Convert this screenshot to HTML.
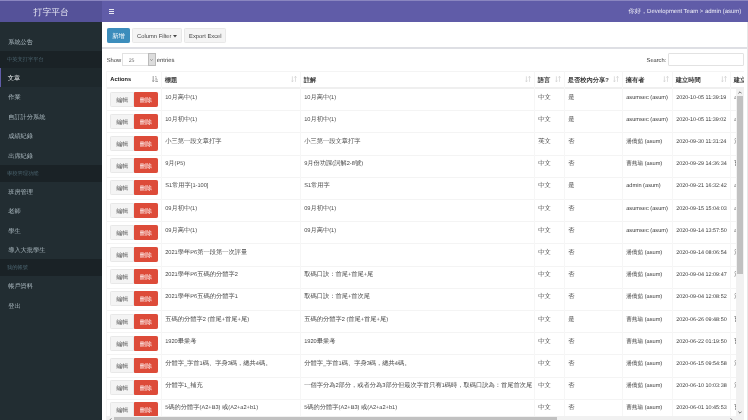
<!DOCTYPE html>
<html><head><meta charset="utf-8"><style>
*{box-sizing:border-box;margin:0;padding:0}
html,body{width:748px;height:420px;overflow:hidden;background:#fff}
body{filter:blur(0.3px)}
body{position:relative;font-family:"Liberation Sans",sans-serif;color:#333;text-rendering:geometricPrecision}
.a{position:absolute;white-space:nowrap}
.logo{left:0;top:0;width:102.35px;height:22.25px;background:#555299;color:#e8e8f4;font-size:8.8px;line-height:24.4px;text-align:center}
.nav{left:102.35px;top:0;right:0;height:22.25px;background:#605ca8}
.topline{left:0;top:0;width:748px;height:1px;background:#8a86c0}
.side{left:0;top:22.25px;width:102.35px;height:398px;background:#222d32}
.si{left:0;width:102.35px;height:19.6px;color:#aebcc3;font-size:6.2px;line-height:19.6px;padding-left:8.2px}
.sh{left:0;width:102.35px;height:16.6px;background:#1a2226;color:#4b646f;font-size:5.25px;line-height:16.6px;padding-left:6.9px}
.sa{background:#1e282c;color:#eef0f2;border-left:1.35px solid #605ca8;padding-left:6.85px}
.btn{height:14.8px;border-radius:1.3px;font-size:5.8px;line-height:13.8px;text-align:center;border:0.5px solid #e8e8e8;background:#f4f4f4;color:#444}
.bp{background:#3c8dbc;border-color:#3c8dbc;color:#fff}
.bd{background:#dd4b39;border-color:#dd4b39;color:#fff}
.vl{width:1px;background:#f6f6f6}
.hl{height:1px;background:#f4f4f4}
.th{font-size:6.25px;font-weight:bold;color:#333;line-height:8.9px}
.td{font-size:6.25px;color:#484848;line-height:8.9px}
.lt{font-size:5.65px;color:#383838;line-height:8.9px}
.si,.sh,.btn,.td,.lt,.th,.nt{padding-top:1px}
</style></head><body>

<div class="a logo">打字平台</div>
<div class="a nav"></div>
<div class="a topline"></div>
<div class="a" style="left:108.9px;top:8.90px;width:5.2px;height:1.10px;background:#fff;opacity:.85"></div>
<div class="a" style="left:108.9px;top:10.90px;width:5.2px;height:1.30px;background:#fff;opacity:.85"></div>
<div class="a" style="left:108.9px;top:12.70px;width:5.2px;height:1.30px;background:#fff;opacity:.85"></div>
<div class="a nt" style="right:6.8px;top:7.3px;color:#f0f0f8;font-size:6.2px;line-height:8.9px">你好，<span style="font-size:5.95px">Development Team &gt; admin (asum)</span></div>
<div class="a side"></div>
<div class="a si" style="top:31.70px">系統公告</div>
<div class="a sh" style="top:51.20px">中英文打字平台</div>
<div class="a si sa" style="top:67.60px">文章</div>
<div class="a si" style="top:87.20px">作業</div>
<div class="a si" style="top:106.80px">自訂計分系統</div>
<div class="a si" style="top:126.40px">成績紀錄</div>
<div class="a si" style="top:146.00px">出席紀錄</div>
<div class="a sh" style="top:165.00px">學校管理功能</div>
<div class="a si" style="top:181.60px">班房管理</div>
<div class="a si" style="top:201.10px">老師</div>
<div class="a si" style="top:220.70px">學生</div>
<div class="a si" style="top:240.20px">導入大批學生</div>
<div class="a sh" style="top:259.40px">我的帳號</div>
<div class="a si" style="top:275.90px">帳戶資料</div>
<div class="a si" style="top:295.70px">登出</div>
<div class="a btn bp" style="left:106.7px;top:28.1px;width:23.4px;font-size:6.2px">新增</div>
<div class="a btn" style="left:131.8px;top:28.1px;width:50.6px;line-height:15.6px">Column Filter <svg width="4" height="3" viewBox="0 0 4 3" style="vertical-align:0.6px"><path d="M0 0H4L2 2.4Z" fill="#444"/></svg></div>
<div class="a btn" style="left:184.1px;top:28.1px;width:42.4px;line-height:15.6px">Export Excel</div>
<div class="a" style="left:102.35px;top:47px;width:646px;height:2px;background:#dedfe4"></div>
<div class="a" style="left:747px;top:22.25px;width:1px;height:400px;background:#e6e6e6"></div>
<div class="a lt" style="left:106.7px;top:55.8px;font-size:5.8px">Show</div>
<div class="a" style="left:122.3px;top:53px;width:33.6px;height:13.3px;border:0.6px solid #e2e2e2;background:#fff"></div>
<div class="a" style="left:147.9px;top:53px;width:8px;height:13.3px;background:#ddd;border:0.5px solid #bbb"></div>
<div class="a lt" style="left:128.7px;top:56.2px;font-size:5.2px;color:#666">25</div>
<svg class="a" style="left:150.4px;top:58.6px" width="3" height="2" viewBox="0 0 3 2"><path d="M0.2 0.3L1.5 1.6L2.8 0.3" stroke="#555" stroke-width="0.5" fill="none"/></svg>
<div class="a lt" style="left:156.8px;top:55.8px;font-size:5.9px">entries</div>
<div class="a lt" style="left:646.6px;top:56px;font-size:5.7px">Search:</div>
<div class="a" style="left:668.3px;top:53.4px;width:75.3px;height:12.9px;border:0.6px solid #e2e2e2;border-radius:1px;background:#fff"></div>
<div class="a hl" style="left:106.00px;top:71.00px;width:637.60px"></div>
<div class="a" style="left:106.00px;top:87px;width:637.60px;height:2px;background:#efefef"></div>
<div class="a hl" style="left:106.00px;top:110.20px;width:630.00px"></div>
<div class="a hl" style="left:106.00px;top:132.40px;width:630.00px"></div>
<div class="a hl" style="left:106.00px;top:154.60px;width:630.00px"></div>
<div class="a hl" style="left:106.00px;top:176.80px;width:630.00px"></div>
<div class="a hl" style="left:106.00px;top:199.00px;width:630.00px"></div>
<div class="a hl" style="left:106.00px;top:221.20px;width:630.00px"></div>
<div class="a hl" style="left:106.00px;top:243.40px;width:630.00px"></div>
<div class="a hl" style="left:106.00px;top:265.60px;width:630.00px"></div>
<div class="a hl" style="left:106.00px;top:287.80px;width:630.00px"></div>
<div class="a hl" style="left:106.00px;top:310.00px;width:630.00px"></div>
<div class="a hl" style="left:106.00px;top:332.20px;width:630.00px"></div>
<div class="a hl" style="left:106.00px;top:354.40px;width:630.00px"></div>
<div class="a hl" style="left:106.00px;top:376.60px;width:630.00px"></div>
<div class="a hl" style="left:106.00px;top:398.80px;width:630.00px"></div>
<div class="a hl" style="left:106.00px;top:421.00px;width:630.00px"></div>
<div class="a vl" style="left:106.00px;top:71.00px;height:349.00px"></div>
<div class="a vl" style="left:161.00px;top:71.00px;height:349.00px"></div>
<div class="a vl" style="left:300.00px;top:71.00px;height:349.00px"></div>
<div class="a vl" style="left:534.00px;top:71.00px;height:349.00px"></div>
<div class="a vl" style="left:564.00px;top:71.00px;height:349.00px"></div>
<div class="a vl" style="left:622.00px;top:71.00px;height:349.00px"></div>
<div class="a vl" style="left:672.00px;top:71.00px;height:349.00px"></div>
<div class="a vl" style="left:730.00px;top:71.00px;height:349.00px"></div>
<div class="a" style="left:106px;top:71px;width:637.60px;height:18px;overflow:hidden">
<div class="a th" style="left:4.30px;top:4.3px;font-size:5.7px;letter-spacing:0;color:#222">Actions</div>
<div class="a th" style="left:58.80px;top:5.3px;font-weight:bold;color:#3a3a3a">標題</div>
<div class="a th" style="left:197.80px;top:5.3px;font-weight:bold;color:#3a3a3a">註解</div>
<div class="a th" style="left:431.80px;top:5.3px;font-weight:bold;color:#3a3a3a">語言</div>
<div class="a th" style="left:461.80px;top:5.3px;font-weight:bold;color:#3a3a3a">是否校內分享<span style="font-size:5.9px">?</span></div>
<div class="a th" style="left:519.80px;top:5.3px;font-weight:bold;color:#3a3a3a">擁有者</div>
<div class="a th" style="left:569.80px;top:5.3px;font-weight:bold;color:#3a3a3a">建立時間</div>
<div class="a th" style="left:627.80px;top:5.3px;font-weight:bold;color:#3a3a3a">建立</div>
</div>
<svg class="a" style="left:290.60px;top:75.90px" width="6" height="6.2" viewBox="0 0 6 6.2"><path d="M1.4 0.3V5.9M0.3 4.6L1.4 5.9L2.5 4.6M4.5 5.9V0.3M3.4 1.6L4.5 0.3L5.6 1.6" stroke="#d0d0d0" stroke-width="0.7" fill="none"/></svg>
<svg class="a" style="left:524.60px;top:75.90px" width="6" height="6.2" viewBox="0 0 6 6.2"><path d="M1.4 0.3V5.9M0.3 4.6L1.4 5.9L2.5 4.6M4.5 5.9V0.3M3.4 1.6L4.5 0.3L5.6 1.6" stroke="#d0d0d0" stroke-width="0.7" fill="none"/></svg>
<svg class="a" style="left:554.60px;top:75.90px" width="6" height="6.2" viewBox="0 0 6 6.2"><path d="M1.4 0.3V5.9M0.3 4.6L1.4 5.9L2.5 4.6M4.5 5.9V0.3M3.4 1.6L4.5 0.3L5.6 1.6" stroke="#d0d0d0" stroke-width="0.7" fill="none"/></svg>
<svg class="a" style="left:612.60px;top:75.90px" width="6" height="6.2" viewBox="0 0 6 6.2"><path d="M1.4 0.3V5.9M0.3 4.6L1.4 5.9L2.5 4.6M4.5 5.9V0.3M3.4 1.6L4.5 0.3L5.6 1.6" stroke="#d0d0d0" stroke-width="0.7" fill="none"/></svg>
<svg class="a" style="left:662.60px;top:75.90px" width="6" height="6.2" viewBox="0 0 6 6.2"><path d="M1.4 0.3V5.9M0.3 4.6L1.4 5.9L2.5 4.6M4.5 5.9V0.3M3.4 1.6L4.5 0.3L5.6 1.6" stroke="#d0d0d0" stroke-width="0.7" fill="none"/></svg>
<svg class="a" style="left:720.60px;top:75.90px" width="6" height="6.2" viewBox="0 0 6 6.2"><path d="M1.4 0.3V5.9M0.3 4.6L1.4 5.9L2.5 4.6M4.5 5.9V0.3M3.4 1.6L4.5 0.3L5.6 1.6" stroke="#d0d0d0" stroke-width="0.7" fill="none"/></svg>
<svg class="a" style="left:151.9px;top:76px" width="6.4" height="6" viewBox="0 0 6.4 6"><path d="M1.2 0V5.6M0.2 4.4L1.2 5.7L2.2 4.4" stroke="#888" stroke-width="0.8" fill="none"/><path d="M3.3 0.5H4.3M3.3 2.2H5M3.3 3.9H5.7M3.3 5.5H6.4" stroke="#999" stroke-width="0.9"/></svg>
<div class="a btn" style="left:110.2px;top:91.60px;width:24px;height:15px;line-height:14.4px;border-radius:1.3px 0 0 1.3px;font-size:6px;color:#555">編輯</div>
<div class="a btn bd" style="left:134px;top:91.60px;width:24px;height:15px;line-height:14.4px;border-radius:0 1.3px 1.3px 0;font-size:6px">刪除</div>
<div class="a td" style="left:165.20px;top:92.60px;width:134.80px;overflow:hidden"><span style="font-size:5.65px">10</span>月高中<span style="font-size:5.65px">(1)</span></div>
<div class="a td" style="left:304.20px;top:92.60px;width:229.80px;overflow:hidden"><span style="font-size:5.65px">10</span>月高中<span style="font-size:5.65px">(1)</span></div>
<div class="a td" style="left:538.20px;top:92.60px;width:25.80px;overflow:hidden">中文</div>
<div class="a td" style="left:568.20px;top:92.60px;width:53.80px;overflow:hidden">是</div>
<div class="a lt" style="left:626.20px;top:92.60px;width:45.80px;overflow:hidden"><span style="font-size:5.65px">asumsec (asum)</span></div>
<div class="a lt" style="left:676.20px;top:92.60px;width:53.80px;overflow:hidden;font-size:5.45px">2020-10-05 11:39:19</div>
<div class="a td" style="left:734.20px;top:92.60px;width:1.80px;overflow:hidden"><span style="font-size:5.65px">a</span></div>
<div class="a btn" style="left:110.2px;top:113.80px;width:24px;height:15px;line-height:14.4px;border-radius:1.3px 0 0 1.3px;font-size:6px;color:#555">編輯</div>
<div class="a btn bd" style="left:134px;top:113.80px;width:24px;height:15px;line-height:14.4px;border-radius:0 1.3px 1.3px 0;font-size:6px">刪除</div>
<div class="a td" style="left:165.20px;top:114.80px;width:134.80px;overflow:hidden"><span style="font-size:5.65px">10</span>月初中<span style="font-size:5.65px">(1)</span></div>
<div class="a td" style="left:304.20px;top:114.80px;width:229.80px;overflow:hidden"><span style="font-size:5.65px">10</span>月初中<span style="font-size:5.65px">(1)</span></div>
<div class="a td" style="left:538.20px;top:114.80px;width:25.80px;overflow:hidden">中文</div>
<div class="a td" style="left:568.20px;top:114.80px;width:53.80px;overflow:hidden">是</div>
<div class="a lt" style="left:626.20px;top:114.80px;width:45.80px;overflow:hidden"><span style="font-size:5.65px">asumsec (asum)</span></div>
<div class="a lt" style="left:676.20px;top:114.80px;width:53.80px;overflow:hidden;font-size:5.45px">2020-10-05 11:39:02</div>
<div class="a td" style="left:734.20px;top:114.80px;width:1.80px;overflow:hidden"><span style="font-size:5.65px">a</span></div>
<div class="a btn" style="left:110.2px;top:136.00px;width:24px;height:15px;line-height:14.4px;border-radius:1.3px 0 0 1.3px;font-size:6px;color:#555">編輯</div>
<div class="a btn bd" style="left:134px;top:136.00px;width:24px;height:15px;line-height:14.4px;border-radius:0 1.3px 1.3px 0;font-size:6px">刪除</div>
<div class="a td" style="left:165.20px;top:137.00px;width:134.80px;overflow:hidden">小三第一段文章打字</div>
<div class="a td" style="left:304.20px;top:137.00px;width:229.80px;overflow:hidden">小三第一段文章打字</div>
<div class="a td" style="left:538.20px;top:137.00px;width:25.80px;overflow:hidden">英文</div>
<div class="a td" style="left:568.20px;top:137.00px;width:53.80px;overflow:hidden">否</div>
<div class="a lt" style="left:626.20px;top:137.00px;width:45.80px;overflow:hidden">潘僑茹<span style="font-size:5.65px"> (asum)</span></div>
<div class="a lt" style="left:676.20px;top:137.00px;width:53.80px;overflow:hidden;font-size:5.45px">2020-09-30 11:31:24</div>
<div class="a td" style="left:734.20px;top:137.00px;width:1.80px;overflow:hidden">潘</div>
<div class="a btn" style="left:110.2px;top:158.20px;width:24px;height:15px;line-height:14.4px;border-radius:1.3px 0 0 1.3px;font-size:6px;color:#555">編輯</div>
<div class="a btn bd" style="left:134px;top:158.20px;width:24px;height:15px;line-height:14.4px;border-radius:0 1.3px 1.3px 0;font-size:6px">刪除</div>
<div class="a td" style="left:165.20px;top:159.20px;width:134.80px;overflow:hidden"><span style="font-size:5.65px">9</span>月<span style="font-size:5.65px">(P5)</span></div>
<div class="a td" style="left:304.20px;top:159.20px;width:229.80px;overflow:hidden"><span style="font-size:5.65px">9</span>月份功課<span style="font-size:5.65px">(</span>詞解<span style="font-size:5.65px">2-8</span>號<span style="font-size:5.65px">)</span></div>
<div class="a td" style="left:538.20px;top:159.20px;width:25.80px;overflow:hidden">中文</div>
<div class="a td" style="left:568.20px;top:159.20px;width:53.80px;overflow:hidden">否</div>
<div class="a lt" style="left:626.20px;top:159.20px;width:45.80px;overflow:hidden">曹燕瑜<span style="font-size:5.65px"> (asum)</span></div>
<div class="a lt" style="left:676.20px;top:159.20px;width:53.80px;overflow:hidden;font-size:5.45px">2020-09-29 14:36:34</div>
<div class="a td" style="left:734.20px;top:159.20px;width:1.80px;overflow:hidden">曹</div>
<div class="a btn" style="left:110.2px;top:180.40px;width:24px;height:15px;line-height:14.4px;border-radius:1.3px 0 0 1.3px;font-size:6px;color:#555">編輯</div>
<div class="a btn bd" style="left:134px;top:180.40px;width:24px;height:15px;line-height:14.4px;border-radius:0 1.3px 1.3px 0;font-size:6px">刪除</div>
<div class="a td" style="left:165.20px;top:181.40px;width:134.80px;overflow:hidden"><span style="font-size:5.65px">S1</span>常用字<span style="font-size:5.65px">[1-100]</span></div>
<div class="a td" style="left:304.20px;top:181.40px;width:229.80px;overflow:hidden"><span style="font-size:5.65px">S1</span>常用字</div>
<div class="a td" style="left:538.20px;top:181.40px;width:25.80px;overflow:hidden">中文</div>
<div class="a td" style="left:568.20px;top:181.40px;width:53.80px;overflow:hidden">是</div>
<div class="a lt" style="left:626.20px;top:181.40px;width:45.80px;overflow:hidden"><span style="font-size:5.65px">admin (asum)</span></div>
<div class="a lt" style="left:676.20px;top:181.40px;width:53.80px;overflow:hidden;font-size:5.45px">2020-09-21 16:32:42</div>
<div class="a td" style="left:734.20px;top:181.40px;width:1.80px;overflow:hidden"><span style="font-size:5.65px">a</span></div>
<div class="a btn" style="left:110.2px;top:202.60px;width:24px;height:15px;line-height:14.4px;border-radius:1.3px 0 0 1.3px;font-size:6px;color:#555">編輯</div>
<div class="a btn bd" style="left:134px;top:202.60px;width:24px;height:15px;line-height:14.4px;border-radius:0 1.3px 1.3px 0;font-size:6px">刪除</div>
<div class="a td" style="left:165.20px;top:203.60px;width:134.80px;overflow:hidden"><span style="font-size:5.65px">09</span>月初中<span style="font-size:5.65px">(1)</span></div>
<div class="a td" style="left:304.20px;top:203.60px;width:229.80px;overflow:hidden"><span style="font-size:5.65px">09</span>月初中<span style="font-size:5.65px">(1)</span></div>
<div class="a td" style="left:538.20px;top:203.60px;width:25.80px;overflow:hidden">中文</div>
<div class="a td" style="left:568.20px;top:203.60px;width:53.80px;overflow:hidden">否</div>
<div class="a lt" style="left:626.20px;top:203.60px;width:45.80px;overflow:hidden"><span style="font-size:5.65px">asumsec (asum)</span></div>
<div class="a lt" style="left:676.20px;top:203.60px;width:53.80px;overflow:hidden;font-size:5.45px">2020-09-15 15:04:03</div>
<div class="a td" style="left:734.20px;top:203.60px;width:1.80px;overflow:hidden"><span style="font-size:5.65px">a</span></div>
<div class="a btn" style="left:110.2px;top:224.80px;width:24px;height:15px;line-height:14.4px;border-radius:1.3px 0 0 1.3px;font-size:6px;color:#555">編輯</div>
<div class="a btn bd" style="left:134px;top:224.80px;width:24px;height:15px;line-height:14.4px;border-radius:0 1.3px 1.3px 0;font-size:6px">刪除</div>
<div class="a td" style="left:165.20px;top:225.80px;width:134.80px;overflow:hidden"><span style="font-size:5.65px">09</span>月高中<span style="font-size:5.65px">(1)</span></div>
<div class="a td" style="left:304.20px;top:225.80px;width:229.80px;overflow:hidden"><span style="font-size:5.65px">09</span>月高中<span style="font-size:5.65px">(1)</span></div>
<div class="a td" style="left:538.20px;top:225.80px;width:25.80px;overflow:hidden">中文</div>
<div class="a td" style="left:568.20px;top:225.80px;width:53.80px;overflow:hidden">否</div>
<div class="a lt" style="left:626.20px;top:225.80px;width:45.80px;overflow:hidden"><span style="font-size:5.65px">asumsec (asum)</span></div>
<div class="a lt" style="left:676.20px;top:225.80px;width:53.80px;overflow:hidden;font-size:5.45px">2020-09-14 13:57:50</div>
<div class="a td" style="left:734.20px;top:225.80px;width:1.80px;overflow:hidden"><span style="font-size:5.65px">a</span></div>
<div class="a btn" style="left:110.2px;top:247.00px;width:24px;height:15px;line-height:14.4px;border-radius:1.3px 0 0 1.3px;font-size:6px;color:#555">編輯</div>
<div class="a btn bd" style="left:134px;top:247.00px;width:24px;height:15px;line-height:14.4px;border-radius:0 1.3px 1.3px 0;font-size:6px">刪除</div>
<div class="a td" style="left:165.20px;top:248.00px;width:134.80px;overflow:hidden"><span style="font-size:5.65px">2021</span>學年<span style="font-size:5.65px">P6</span>第一段第一次評量</div>
<div class="a td" style="left:304.20px;top:248.00px;width:229.80px;overflow:hidden"></div>
<div class="a td" style="left:538.20px;top:248.00px;width:25.80px;overflow:hidden">中文</div>
<div class="a td" style="left:568.20px;top:248.00px;width:53.80px;overflow:hidden">否</div>
<div class="a lt" style="left:626.20px;top:248.00px;width:45.80px;overflow:hidden">潘僑茹<span style="font-size:5.65px"> (asum)</span></div>
<div class="a lt" style="left:676.20px;top:248.00px;width:53.80px;overflow:hidden;font-size:5.45px">2020-09-14 08:06:54</div>
<div class="a td" style="left:734.20px;top:248.00px;width:1.80px;overflow:hidden">潘</div>
<div class="a btn" style="left:110.2px;top:269.20px;width:24px;height:15px;line-height:14.4px;border-radius:1.3px 0 0 1.3px;font-size:6px;color:#555">編輯</div>
<div class="a btn bd" style="left:134px;top:269.20px;width:24px;height:15px;line-height:14.4px;border-radius:0 1.3px 1.3px 0;font-size:6px">刪除</div>
<div class="a td" style="left:165.20px;top:270.20px;width:134.80px;overflow:hidden"><span style="font-size:5.65px">2021</span>學年<span style="font-size:5.65px">P6</span>五碼的分體字<span style="font-size:5.65px">2</span></div>
<div class="a td" style="left:304.20px;top:270.20px;width:229.80px;overflow:hidden">取碼口訣：首尾<span style="font-size:5.65px">+</span>首尾<span style="font-size:5.65px">+</span>尾</div>
<div class="a td" style="left:538.20px;top:270.20px;width:25.80px;overflow:hidden">中文</div>
<div class="a td" style="left:568.20px;top:270.20px;width:53.80px;overflow:hidden">否</div>
<div class="a lt" style="left:626.20px;top:270.20px;width:45.80px;overflow:hidden">潘僑茹<span style="font-size:5.65px"> (asum)</span></div>
<div class="a lt" style="left:676.20px;top:270.20px;width:53.80px;overflow:hidden;font-size:5.45px">2020-09-04 12:09:47</div>
<div class="a td" style="left:734.20px;top:270.20px;width:1.80px;overflow:hidden">潘</div>
<div class="a btn" style="left:110.2px;top:291.40px;width:24px;height:15px;line-height:14.4px;border-radius:1.3px 0 0 1.3px;font-size:6px;color:#555">編輯</div>
<div class="a btn bd" style="left:134px;top:291.40px;width:24px;height:15px;line-height:14.4px;border-radius:0 1.3px 1.3px 0;font-size:6px">刪除</div>
<div class="a td" style="left:165.20px;top:292.40px;width:134.80px;overflow:hidden"><span style="font-size:5.65px">2021</span>學年<span style="font-size:5.65px">P6</span>五碼的分體字<span style="font-size:5.65px">1</span></div>
<div class="a td" style="left:304.20px;top:292.40px;width:229.80px;overflow:hidden">取碼口訣：首尾<span style="font-size:5.65px">+</span>首次尾</div>
<div class="a td" style="left:538.20px;top:292.40px;width:25.80px;overflow:hidden">中文</div>
<div class="a td" style="left:568.20px;top:292.40px;width:53.80px;overflow:hidden">否</div>
<div class="a lt" style="left:626.20px;top:292.40px;width:45.80px;overflow:hidden">潘僑茹<span style="font-size:5.65px"> (asum)</span></div>
<div class="a lt" style="left:676.20px;top:292.40px;width:53.80px;overflow:hidden;font-size:5.45px">2020-09-04 12:08:52</div>
<div class="a td" style="left:734.20px;top:292.40px;width:1.80px;overflow:hidden">潘</div>
<div class="a btn" style="left:110.2px;top:313.60px;width:24px;height:15px;line-height:14.4px;border-radius:1.3px 0 0 1.3px;font-size:6px;color:#555">編輯</div>
<div class="a btn bd" style="left:134px;top:313.60px;width:24px;height:15px;line-height:14.4px;border-radius:0 1.3px 1.3px 0;font-size:6px">刪除</div>
<div class="a td" style="left:165.20px;top:314.60px;width:134.80px;overflow:hidden">五碼的分體字<span style="font-size:5.65px">2 (</span>首尾<span style="font-size:5.65px">+</span>首尾<span style="font-size:5.65px">+</span>尾<span style="font-size:5.65px">)</span></div>
<div class="a td" style="left:304.20px;top:314.60px;width:229.80px;overflow:hidden">五碼的分體字<span style="font-size:5.65px">2 (</span>首尾<span style="font-size:5.65px">+</span>首尾<span style="font-size:5.65px">+</span>尾<span style="font-size:5.65px">)</span></div>
<div class="a td" style="left:538.20px;top:314.60px;width:25.80px;overflow:hidden">中文</div>
<div class="a td" style="left:568.20px;top:314.60px;width:53.80px;overflow:hidden">是</div>
<div class="a lt" style="left:626.20px;top:314.60px;width:45.80px;overflow:hidden">曹燕瑜<span style="font-size:5.65px"> (asum)</span></div>
<div class="a lt" style="left:676.20px;top:314.60px;width:53.80px;overflow:hidden;font-size:5.45px">2020-06-26 09:48:50</div>
<div class="a td" style="left:734.20px;top:314.60px;width:1.80px;overflow:hidden">曹</div>
<div class="a btn" style="left:110.2px;top:335.80px;width:24px;height:15px;line-height:14.4px;border-radius:1.3px 0 0 1.3px;font-size:6px;color:#555">編輯</div>
<div class="a btn bd" style="left:134px;top:335.80px;width:24px;height:15px;line-height:14.4px;border-radius:0 1.3px 1.3px 0;font-size:6px">刪除</div>
<div class="a td" style="left:165.20px;top:336.80px;width:134.80px;overflow:hidden"><span style="font-size:5.65px">1920</span>畢業考</div>
<div class="a td" style="left:304.20px;top:336.80px;width:229.80px;overflow:hidden"><span style="font-size:5.65px">1920</span>畢業考</div>
<div class="a td" style="left:538.20px;top:336.80px;width:25.80px;overflow:hidden">中文</div>
<div class="a td" style="left:568.20px;top:336.80px;width:53.80px;overflow:hidden">否</div>
<div class="a lt" style="left:626.20px;top:336.80px;width:45.80px;overflow:hidden">曹燕瑜<span style="font-size:5.65px"> (asum)</span></div>
<div class="a lt" style="left:676.20px;top:336.80px;width:53.80px;overflow:hidden;font-size:5.45px">2020-06-22 01:19:50</div>
<div class="a td" style="left:734.20px;top:336.80px;width:1.80px;overflow:hidden">曹</div>
<div class="a btn" style="left:110.2px;top:358.00px;width:24px;height:15px;line-height:14.4px;border-radius:1.3px 0 0 1.3px;font-size:6px;color:#555">編輯</div>
<div class="a btn bd" style="left:134px;top:358.00px;width:24px;height:15px;line-height:14.4px;border-radius:0 1.3px 1.3px 0;font-size:6px">刪除</div>
<div class="a td" style="left:165.20px;top:359.00px;width:134.80px;overflow:hidden">分體字<span style="font-size:5.65px">_</span>字首<span style="font-size:5.65px">1</span>碼、字身<span style="font-size:5.65px">3</span>碼，總共<span style="font-size:5.65px">4</span>碼。</div>
<div class="a td" style="left:304.20px;top:359.00px;width:229.80px;overflow:hidden">分體字<span style="font-size:5.65px">_</span>字首<span style="font-size:5.65px">1</span>碼、字身<span style="font-size:5.65px">3</span>碼，總共<span style="font-size:5.65px">4</span>碼。</div>
<div class="a td" style="left:538.20px;top:359.00px;width:25.80px;overflow:hidden">中文</div>
<div class="a td" style="left:568.20px;top:359.00px;width:53.80px;overflow:hidden">否</div>
<div class="a lt" style="left:626.20px;top:359.00px;width:45.80px;overflow:hidden">潘僑茹<span style="font-size:5.65px"> (asum)</span></div>
<div class="a lt" style="left:676.20px;top:359.00px;width:53.80px;overflow:hidden;font-size:5.45px">2020-06-15 09:54:58</div>
<div class="a td" style="left:734.20px;top:359.00px;width:1.80px;overflow:hidden">潘</div>
<div class="a btn" style="left:110.2px;top:380.20px;width:24px;height:15px;line-height:14.4px;border-radius:1.3px 0 0 1.3px;font-size:6px;color:#555">編輯</div>
<div class="a btn bd" style="left:134px;top:380.20px;width:24px;height:15px;line-height:14.4px;border-radius:0 1.3px 1.3px 0;font-size:6px">刪除</div>
<div class="a td" style="left:165.20px;top:381.20px;width:134.80px;overflow:hidden">分體字<span style="font-size:5.65px">1_</span>補充</div>
<div class="a td" style="left:304.20px;top:381.20px;width:229.80px;overflow:hidden">一個字分為<span style="font-size:5.65px">2</span>部分，或者分為<span style="font-size:5.65px">3</span>部分但最次字首只有<span style="font-size:5.65px">1</span>碼時，取碼口訣為：首尾首次尾</div>
<div class="a td" style="left:538.20px;top:381.20px;width:25.80px;overflow:hidden">中文</div>
<div class="a td" style="left:568.20px;top:381.20px;width:53.80px;overflow:hidden">否</div>
<div class="a lt" style="left:626.20px;top:381.20px;width:45.80px;overflow:hidden">潘僑茹<span style="font-size:5.65px"> (asum)</span></div>
<div class="a lt" style="left:676.20px;top:381.20px;width:53.80px;overflow:hidden;font-size:5.45px">2020-06-10 10:03:38</div>
<div class="a td" style="left:734.20px;top:381.20px;width:1.80px;overflow:hidden">潘</div>
<div class="a btn" style="left:110.2px;top:402.40px;width:24px;height:15px;line-height:14.4px;border-radius:1.3px 0 0 1.3px;font-size:6px;color:#555">編輯</div>
<div class="a btn bd" style="left:134px;top:402.40px;width:24px;height:15px;line-height:14.4px;border-radius:0 1.3px 1.3px 0;font-size:6px">刪除</div>
<div class="a td" style="left:165.20px;top:403.40px;width:134.80px;overflow:hidden"><span style="font-size:5.65px">5</span>碼的分體字<span style="font-size:5.65px">(A2+B3) </span>或<span style="font-size:5.65px">(A2+a2+b1)</span></div>
<div class="a td" style="left:304.20px;top:403.40px;width:229.80px;overflow:hidden"><span style="font-size:5.65px">5</span>碼的分體字<span style="font-size:5.65px">(A2+B3) </span>或<span style="font-size:5.65px">(A2+a2+b1)</span></div>
<div class="a td" style="left:538.20px;top:403.40px;width:25.80px;overflow:hidden">中文</div>
<div class="a td" style="left:568.20px;top:403.40px;width:53.80px;overflow:hidden">否</div>
<div class="a lt" style="left:626.20px;top:403.40px;width:45.80px;overflow:hidden">曹燕瑜<span style="font-size:5.65px"> (asum)</span></div>
<div class="a lt" style="left:676.20px;top:403.40px;width:53.80px;overflow:hidden;font-size:5.45px">2020-06-01 10:45:53</div>
<div class="a td" style="left:734.20px;top:403.40px;width:1.80px;overflow:hidden">曹</div>
<div class="a" style="left:736px;top:88.5px;width:7.6px;height:332px;background:#f1f1f1"></div>
<div class="a" style="left:736.6px;top:96px;width:6.4px;height:177.5px;background:#c1c1c1"></div>
<svg class="a" style="left:738px;top:90.5px" width="4" height="3" viewBox="0 0 4 3"><path d="M0.4 2.4L2 0.8L3.6 2.4" stroke="#505050" stroke-width="0.8" fill="none"/></svg>
<svg class="a" style="left:738px;top:410.5px" width="4" height="3" viewBox="0 0 4 3"><path d="M0.4 0.6L2 2.2L3.6 0.6" stroke="#505050" stroke-width="0.8" fill="none"/></svg>
<div class="a" style="left:106.4px;top:416px;width:629.6px;height:4px;background:#f1f1f1"></div>
<div class="a" style="left:114px;top:416.6px;width:443px;height:3.4px;background:#c1c1c1"></div>
<svg class="a" style="left:108.6px;top:417.6px" width="3" height="3" viewBox="0 0 3 3"><path d="M2.4 0.4L0.9 1.9" stroke="#505050" stroke-width="0.8" fill="none"/></svg>
<svg class="a" style="left:729.6px;top:417.6px" width="3" height="3" viewBox="0 0 3 3"><path d="M0.6 0.4L2.1 1.9" stroke="#505050" stroke-width="0.8" fill="none"/></svg>
</body></html>
